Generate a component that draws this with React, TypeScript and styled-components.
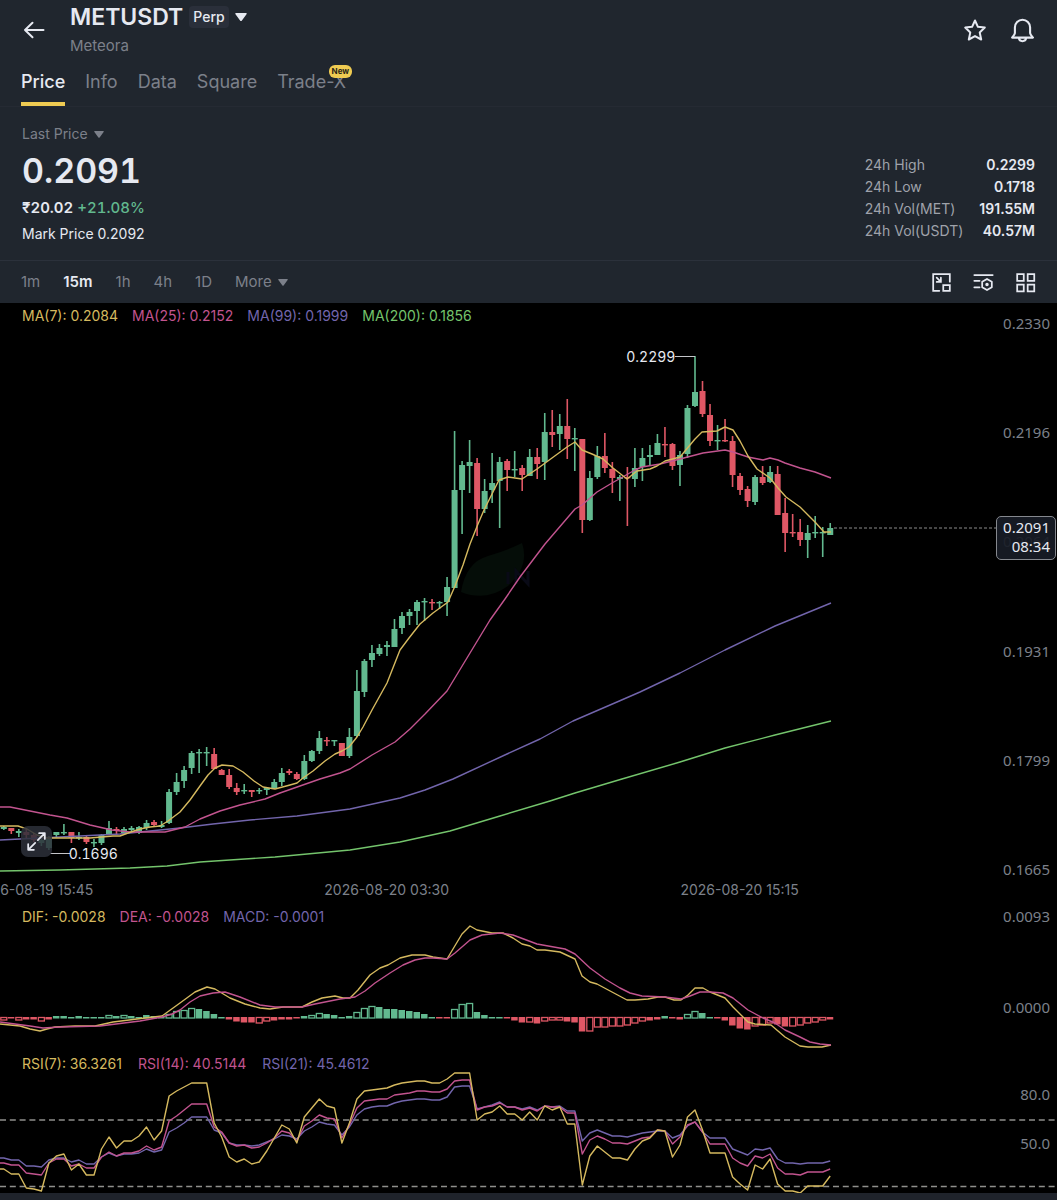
import React, { useState } from "react";
import styled, { createGlobalStyle } from "styled-components";

const color = {
  surface: "#20262e",
  line: "#2b313b",
  text: "#e6e9f1",
  muted: "#7c808a",
  soft: "#9fa2aa",
  up: "#62b98f",
  down: "#df5765",
  yellow: "#d5b95f",
  pink: "#c2548f",
  purple: "#7265ac",
  lime: "#74c46c",
  brand: "#efcb52",
};

const GlobalStyle = createGlobalStyle`
  * { box-sizing: border-box; }
  body { margin: 0; background: #000; }
  button, select { font: inherit; color: inherit; background: none; border: 0; padding: 0; margin: 0; cursor: pointer; }
  h1, p, dl, dd, dt { margin: 0; }
`;

const Page = styled.main`
  font-family: Inter, "Liberation Sans", sans-serif;
  font-size: 14px;
  line-height: 20px;
  color: ${color.text};
  background: #000;
  overflow: hidden;
`;

const Top = styled.div`
  background: ${color.surface};
`;

const Header = styled.header`
  display: flex;
  align-items: center;
  height: 60px;
  padding: 0 22px;
`;

const IconButton = styled.button`
  display: flex;
  svg { display: block; }
`;

const Pair = styled.div`
  flex: 1;
  margin-left: 24px;
  padding-bottom: 2px;
`;

const PairButton = styled.button`
  display: flex;
  align-items: center;
  gap: 6px;
  height: 34px;
`;

const PairName = styled.h1`
  font-size: 23px;
  line-height: 34px;
  font-weight: 600;
`;

const Tag = styled.span`
  padding: 0 4px;
  border-radius: 4px;
  background: #2a2f3a;
  line-height: 22px;
  font-weight: 500;
`;

const PairSub = styled.p`
  font-size: 15px;
  line-height: 24px;
  color: ${color.muted};
`;

const HeaderActions = styled.div`
  display: flex;
  gap: 23px;
`;

const Tabs = styled.nav`
  display: flex;
  gap: 20px;
  height: 47px;
  padding: 0 21px;
  border-bottom: 1px solid #252a33;
`;

const Tab = styled.a<{ $active?: boolean }>`
  position: relative;
  line-height: 44px;
  height: 46px;
  font-size: 18px;
  font-weight: ${(p) => (p.$active ? 500 : 400)};
  color: ${(p) => (p.$active ? color.text : color.muted)};
  border-bottom: 4px solid ${(p) => (p.$active ? color.brand : "transparent")};
  text-decoration: none;
`;

const NewBadge = styled.span`
  position: absolute;
  top: 5px;
  right: -6px;
  padding: 0 3px;
  border-radius: 6px;
  background: ${color.brand};
  color: #2a2618;
  font-size: 8px;
  line-height: 13px;
  font-weight: 700;
`;

const Summary = styled.section`
  display: flex;
  justify-content: space-between;
  padding: 17px 22px 12px;
  border-bottom: 1px solid ${color.line};
`;

const Picker = styled.label`
  display: inline-flex;
  align-items: center;
  gap: 6px;
  color: ${color.muted};
  select { appearance: none; line-height: 20px; outline: none; }
  option { color: #000; }
`;

const LastPrice = styled.div`
  margin-top: 2px;
  font-size: 34px;
  line-height: 50px;
  font-weight: 600;
  font-variant-numeric: tabular-nums;
`;

const Change = styled.p`
  font-size: 15px;
  line-height: 24px;
  font-weight: 500;
  font-variant-numeric: tabular-nums;
  color: ${color.up};
  strong { color: ${color.text}; font-weight: 600; }
`;

const Mark = styled.p`
  line-height: 28px;
`;

const Stats = styled.dl`
  display: grid;
  grid-template-columns: auto auto;
  column-gap: 16px;
  align-content: start;
  margin-top: 30px;
  line-height: 22px;
  dt { color: ${color.soft}; }
  dd { text-align: right; font-weight: 600; }
`;

const Toolbar = styled.div`
  display: flex;
  align-items: center;
  justify-content: space-between;
  height: 42px;
  padding: 0 21px;
`;

const Intervals = styled.div`
  display: flex;
  gap: 23px;
  font-size: 15px;
`;

const Interval = styled.button<{ $active: boolean }>`
  font-weight: ${(p) => (p.$active ? 600 : 400)};
  color: ${(p) => (p.$active ? color.text : color.muted)};
`;

const Tools = styled.div`
  display: flex;
  gap: 21px;
`;

const Pane = styled.section<{ $height: number }>`
  position: relative;
  display: grid;
  height: ${(p) => p.$height}px;
  > * { grid-area: 1 / 1; }
`;

const Plot = styled.svg`
  display: block;
  width: 100%;
  height: 100%;
  min-height: 0;
`;

const Legend = styled.div<{ $top: number; $gap?: number }>`
  z-index: 1;
  display: flex;
  align-self: start;
  gap: ${(p) => p.$gap ?? 14}px;
  padding: ${(p) => p.$top}px 22px 0;
`;

const LegendItem = styled.span<{ $color: string }>`
  color: ${(p) => p.$color};
`;

const Scale = styled.div<{ $top: number; $bottom: number }>`
  justify-self: end;
  display: flex;
  flex-direction: column;
  justify-content: space-between;
  padding: ${(p) => p.$top}px 7px ${(p) => p.$bottom}px 0;
  text-align: right;
  font-family: "Noto Sans", sans-serif;
  font-size: 15px;
  color: ${color.muted};
`;

const PriceTag = styled.div`
  position: absolute;
  top: 213px;
  right: 1px;
  padding: 1px 5px 3px 6px;
  border: 1px solid #85888e;
  border-radius: 5px;
  background: rgba(24, 28, 38, 0.92);
  font-family: "Noto Sans", sans-serif;
  font-size: 15px;
  line-height: 19px;
  text-align: right;
`;

const PointLabel = styled.span<{ $left?: string; $right?: string; $top: number }>`
  position: absolute;
  top: ${(p) => p.$top}px;
  left: ${(p) => p.$left ?? "auto"};
  right: ${(p) => p.$right ?? "auto"};
  font-variant-numeric: tabular-nums;
`;

const ExpandButton = styled(IconButton)`
  position: absolute;
  left: 21px;
  bottom: 23px;
  padding: 5px;
  border-radius: 7px;
  background: rgba(45, 48, 58, 0.85);
`;

const Dates = styled.div`
  display: grid;
  grid-template-columns: 353fr 353fr 353fr 141fr;
  margin-left: -13.5%;
  text-align: center;
  color: ${color.muted};
`;

const Footer = styled.footer`
  height: 7px;
  background: #1f232b;
`;

type Candle = [number, number, number, number, number];

// direction, high, body top, body bottom, low — all but the first on the plot's vertical scale
const candles: Candle[] = [
  [1,826,827,829,830],[0,828,828,831,834],[1,829,831,833,837],[0,829,832,835,838],[0,833,835,840,842],[1,837,840,843,846],[1,836,839,848,850],
  [1,832,832,835,837],[1,824,832,833,835],[0,832,832,838,843],[1,832,837,838,840],[0,835,837,842,844],[1,839,842,843,847],[1,834,835,843,845],
  [1,821,828,834,834],[0,827,829,831,835],[1,827,829,833,834],[1,826,828,830,832],[1,826,827,833,834],[1,820,823,828,830],[0,820,822,825,827],
  [1,821,825,827,828],[1,789,792,823,824],[1,773,782,792,795],[1,766,770,781,788],[1,751,753,768,774],[1,749,752,753,773],[1,747,752,753,766],
  [0,748,754,769,769],[0,769,770,775,775],[0,769,775,787,789],[0,783,788,792,795],[1,784,790,791,794],[0,790,790,792,797],[1,788,790,791,794],
  [1,787,788,790,795],[1,779,782,788,789],[1,768,773,782,786],[0,769,771,773,775],[0,772,774,779,780],[1,755,761,779,780],[1,750,751,761,762],
  [1,731,738,751,754],[0,737,740,741,746],[1,740,740,741,746],[0,743,743,756,756],[1,728,737,756,758],[1,670,691,736,737],[1,659,661,692,697],
  [1,645,653,660,667],[1,644,648,654,656],[1,641,645,647,656],[1,619,629,647,647],[1,612,616,628,634],[1,609,612,616,625],[1,600,602,611,625],
  [1,598,601,602,621],[0,599,602,603,610],[1,601,602,603,609],[1,577,587,602,616],[1,431,490,588,588],[1,461,465,490,534],[1,440,462,466,493],
  [0,458,463,509,536],[1,479,491,509,513],[1,453,483,490,503],[1,457,462,481,528],[0,459,461,470,491],[1,451,469,470,477],[0,465,468,475,491],
  [1,449,457,476,476],[0,448,457,464,479],[1,413,432,462,480],[0,410,432,435,447],[1,414,426,434,450],[0,399,426,439,459],[1,428,438,439,471],
  [0,439,439,520,533],[1,471,478,520,521],[1,446,456,477,479],[0,433,456,468,473],[0,462,469,478,493],[1,475,477,479,501],[0,467,477,478,526],
  [1,448,468,479,487],[1,448,458,467,481],[1,445,455,457,466],[1,434,443,455,455],[0,427,444,445,457],[0,443,444,466,470],[1,451,455,465,486],
  [1,405,408,454,458],[1,356,392,406,407],[0,381,391,414,417],[0,404,415,441,446],[1,425,440,441,450],[0,419,440,441,442],[0,436,441,475,487],
  [0,473,476,490,495],[0,486,489,501,507],[1,475,477,502,505],[0,466,477,483,485],[1,466,472,482,483],[0,466,474,515,515],[0,498,513,533,552],
  [0,514,532,533,537],[0,519,532,540,546],[1,525,533,540,558],[1,516,532,533,538],[1,527,532,533,557],[1,523,528,535,535],
];

const ma7 = "0,826 18,826 27,829 37,835 47,838 55,838 90,838 113,836 120,836 128,833 140,829 150,827 160,826 168,821 180,812 190,800 200,786 208,775 215,768 222,765 233,766 243,772 254,781 263,787 275,789 290,785 297,783 303,778 313,771 325,761 335,754 342,751 349,747 357,737 363,727 372,710 387,683 400,650 409,638 420,624 433,613 448,602 455,586 463,565 470,544 478,524 484,510 499,480 508,477 522,479 537,469 552,458 567,447 575,442 582,450 592,454 603,459 613,468 627,479 637,471 650,469 657,466 665,461 680,457 695,439 702,432 717,431 725,427 733,430 740,441 748,456 757,469 770,478 778,488 786,497 800,507 815,522 824,532 831,532";
const ma25 = "0,807 10,807 30,811 50,815 67,818 90,825 112,830 130,832 145,832 165,832 185,827 200,819 220,811 240,805 265,799 280,793 300,786 320,779 340,773 350,769 372,755 395,742 410,729 425,714 447,691 470,653 490,620 505,599 520,577 545,544 575,509 582,505 597,492 612,483 635,470 642,467 660,464 680,459 703,453 725,450 733,452 748,457 763,460 770,458 778,460 785,463 800,468 815,472 831,478";
const ma99 = "0,840 60,837 120,834 180,828 213,824 250,820 297,816 350,809 400,798 425,790 453,779 507,754 540,739 573,721 617,702 640,692 680,673 725,650 775,626 831,603";
const ma200 = "0,871 60,870 130,868 167,866 200,862 275,857 350,850 400,842 450,831 500,816 550,801 575,793 622,779 680,762 725,748 775,735 831,721";

const dif = "0,1024 20,1026 30,1029 40,1031 47,1029 55,1027 75,1026 95,1026 113,1022 145,1018 162,1016 180,1003 195,992 207,987 215,989 230,998 245,1004 260,1008 270,1009 283,1007 302,1007 312,1002 322,998 335,996 343,998 350,998 358,990 370,975 380,968 388,965 400,958 412,955 425,955 433,957 440,958 447,959 462,934 470,926 477,930 492,933 503,933 513,938 522,944 530,946 537,950 545,950 560,952 575,959 582,976 590,982 597,984 612,992 627,1000 635,1000 648,999 658,997 665,997 674,1000 681,1000 688,995 695,988 703,988 710,992 725,998 733,1007 748,1022 755,1024 771,1025 785,1037 800,1046 808,1047 822,1047 831,1045";
const dea = "0,1022 15,1024 30,1026 43,1028 60,1027 100,1026 140,1021 162,1017 172,1014 180,1010 190,1002 200,996 213,993 225,992 240,997 260,1005 275,1007 302,1007 315,1004 340,999 355,997 365,991 375,983 390,973 403,965 415,960 425,958 433,958 447,959 455,953 470,940 482,935 500,933 513,935 537,944 565,949 575,954 590,968 605,979 620,988 630,993 642,996 665,997 681,999 690,996 700,992 710,992 723,993 733,998 748,1010 763,1018 775,1023 785,1030 800,1037 810,1042 820,1044 831,1045";

const histogram = [
  -3,-1,-3,-2,-2,-4,-2,2,2,1,2,1,1,1,3,2,3,2,1,3,2,1,4,7,8,10,9,7,4,1,-2,-4,-5,-5,-6,-4,-3,-2,-2,-1,2,3,5,4,3,1,2,6,10,12,11,9,9,8,7,6,4,1,
  -1,-1,9,14,15,6,3,1,1,-1,-3,-5,-5,-6,-4,-3,-3,-4,-5,-14,-14,-10,-10,-9,-9,-8,-6,-4,-3,-2,2,-1,-2,4,7,5,1,-1,-3,-8,-11,-12,-9,-8,-6,-7,-9,-9,-8,-6,-5,-3,-2,
];
const hollow = new Set([0,2,5,14,16,22,23,24,25,34,35,41,42,47,48,49,60,61,62,70,72,73,74,78,79,80,81,82,83,84,85,91,92,100,101,102,105,106,107,108,109]);

const rsi7 = [1169,1174,1174,1188,1189,1191,1163,1156,1154,1170,1164,1175,1175,1149,1137,1148,1141,1141,1136,1127,1140,1131,1096,1091,1087,1083,1083,1083,1123,1137,1157,1162,1159,1164,1162,1151,1138,1125,1129,1143,1117,1108,1099,1106,1108,1143,1123,1099,1091,1090,1089,1088,1085,1083,1082,1081,1081,1083,1083,1079,1073,1073,1073,1120,1114,1112,1106,1114,1114,1120,1112,1120,1106,1110,1107,1124,1124,1185,1156,1146,1152,1158,1158,1160,1149,1141,1138,1130,1131,1157,1145,1117,1110,1130,1153,1153,1153,1177,1184,1190,1165,1169,1159,1184,1191,1191,1193,1186,1186,1186,1176];
const rsi14 = [1163,1165,1165,1173,1174,1175,1163,1159,1159,1166,1164,1168,1168,1157,1152,1156,1153,1153,1151,1146,1150,1147,1121,1116,1110,1104,1104,1104,1127,1132,1143,1146,1145,1148,1147,1143,1138,1131,1133,1141,1126,1121,1115,1118,1119,1138,1125,1108,1101,1100,1099,1099,1095,1094,1093,1091,1091,1092,1092,1089,1081,1080,1080,1110,1107,1106,1103,1107,1107,1110,1108,1111,1106,1107,1107,1113,1113,1154,1140,1136,1139,1143,1143,1144,1141,1138,1137,1130,1131,1144,1137,1125,1122,1132,1144,1144,1144,1158,1163,1166,1156,1158,1154,1168,1174,1174,1175,1172,1172,1172,1169];
const rsi21 = [1158,1160,1160,1166,1166,1167,1160,1158,1158,1162,1160,1164,1164,1157,1153,1156,1154,1154,1153,1149,1152,1150,1132,1128,1123,1117,1117,1117,1130,1133,1143,1145,1145,1146,1145,1142,1139,1135,1136,1139,1131,1127,1122,1124,1125,1135,1127,1115,1109,1107,1106,1106,1103,1101,1100,1099,1099,1100,1100,1097,1087,1086,1086,1109,1107,1105,1102,1107,1107,1109,1107,1110,1106,1107,1106,1111,1111,1141,1133,1130,1133,1136,1136,1137,1135,1133,1132,1131,1131,1138,1135,1126,1122,1132,1138,1138,1138,1149,1152,1155,1149,1150,1148,1159,1163,1163,1164,1163,1163,1163,1161];

const xAt = (i: number) => 3.8 + 7.513 * i;
const toPoints = (ys: number[]) => `0,${ys[0]} ` + ys.map((y, i) => `${xAt(i).toFixed(1)},${y}`).join(" ");

function Line({ points, stroke }: { points: string; stroke: string }) {
  return <polyline points={points} fill="none" stroke={stroke} strokeWidth={1.4} strokeLinejoin="round" />;
}

function Caret({ size = 10 }: { size?: number }) {
  return (
    <svg width={size} height={(size * 7) / 10} viewBox="0 0 10 7" aria-hidden="true">
      <path d="M.8 0h8.4q1 .2.4 1L5.6 6.4q-.6.7-1.2 0L.4 1Q-.2.2.8 0z" fill="currentColor" />
    </svg>
  );
}

function Icon({ size, children, width = 2 }: { size: number; children: React.ReactNode; width?: number }) {
  return (
    <svg width={size} height={size} viewBox="0 0 24 24" fill="none" stroke={color.text} strokeWidth={width} strokeLinecap="round" strokeLinejoin="round" aria-hidden="true">
      {children}
    </svg>
  );
}

const intervals = ["1m", "15m", "1h", "4h", "1D"];

export default function App() {
  const [interval, setInterval] = useState("15m");
  return (
    <Page>
      <GlobalStyle />
      <Top>
        <Header>
          <IconButton aria-label="Back">
            <Icon size={24}><path d="M21.500 12H3M10.500 4.800L3 12l7.500 7.200" /></Icon>
          </IconButton>
          <Pair>
            <PairButton>
              <PairName>METUSDT</PairName>
              <Tag>Perp</Tag>
              <Caret size={12} />
            </PairButton>
            <PairSub>Meteora</PairSub>
          </Pair>
          <HeaderActions>
            <IconButton aria-label="Add to favourites">
              <Icon size={24}><path d="M12 2.500l2.900 6.300 6.900.8-5.100 4.800 1.500 7.100L12 18.100l-6.200 3.400 1.500-7.100L2.200 9.600l6.900-.8z" /></Icon>
            </IconButton>
            <IconButton aria-label="Price alerts">
              <Icon size={25}><path d="M2 18.800c1.600-1.700 2.500-2.600 2.700-4.300V9a7.300 7.300 0 0 1 14.600 0v5.500c.2 1.700 1.100 2.600 2.700 4.300zM8.500 19.400c.6 3.800 6.400 3.800 7 0" /></Icon>
            </IconButton>
          </HeaderActions>
        </Header>

        <Tabs>
          <Tab href="#price" $active>Price</Tab>
          <Tab href="#info">Info</Tab>
          <Tab href="#data">Data</Tab>
          <Tab href="#square">Square</Tab>
          <Tab href="#trade-x">Trade-X<NewBadge>New</NewBadge></Tab>
        </Tabs>

        <Summary>
          <div>
            <Picker>
              <select aria-label="Price type"><option>Last Price</option></select>
              <Caret />
            </Picker>
            <LastPrice>0.2091</LastPrice>
            <Change><strong>₹20.02</strong> +21.08%</Change>
            <Mark>Mark Price 0.2092</Mark>
          </div>
          <Stats>
            <dt>24h High</dt><dd>0.2299</dd>
            <dt>24h Low</dt><dd>0.1718</dd>
            <dt>24h Vol(MET)</dt><dd>191.55M</dd>
            <dt>24h Vol(USDT)</dt><dd>40.57M</dd>
          </Stats>
        </Summary>

        <Toolbar>
          <Intervals>
            {intervals.map((name) => (
              <Interval key={name} $active={name === interval} onClick={() => setInterval(name)}>{name}</Interval>
            ))}
            <Picker>
              <select aria-label="More intervals"><option>More</option></select>
              <Caret />
            </Picker>
          </Intervals>
          <Tools>
            <IconButton aria-label="Picture in picture">
              <Icon size={21}><path d="M9.500 21.500H2.500v-19h19v8.500M14 15h7.500v6.500H14zM6.500 6.500l4.500 4.500M11.300 6.500v4.800H6.500" strokeLinejoin="miter" /></Icon>
            </IconButton>
            <IconButton aria-label="Chart settings">
              <Icon size={21}><path d="M1.500 3.500h21M1.500 10h6M1.500 17.500h6M16 8l5.500 3.200v6.200L16 20.600l-5.500-3.200v-6.200z" /><circle cx="16" cy="14.300" r="1" fill={color.text} /></Icon>
            </IconButton>
            <IconButton aria-label="Layout">
              <Icon size={21}><path d="M2.500 2.500h7.500v7.500H2.500zM14.500 2.500H22v7.500h-7.500zM2.500 14.500h7.500V22H2.500zM14.500 14.500H22V22h-7.500z" strokeLinejoin="miter" /></Icon>
            </IconButton>
          </Tools>
        </Toolbar>
      </Top>

      <Pane $height={577}>
        <Plot viewBox="0 303 1057 577" preserveAspectRatio="none" role="img" aria-label="Candlestick chart with moving averages">
          <path d="M461 592Q466 562 488 556Q508 550 522 543Q530 566 508 586Q486 602 461 592z" fill="#050d08" />
          <path d="M508 572v12M516 584v-13l12 13v-13" stroke="#090a16" strokeWidth="3" fill="none" />
          {candles.map(([up, high, top, bottom, low], i) => (
            <g key={i} fill={up ? color.up : color.down}>
              <rect x={xAt(i) - 0.8} y={high} width={1.6} height={low - high} />
              <rect x={xAt(i) - 3} y={top} width={6} height={Math.max(1.4, bottom - top)} />
            </g>
          ))}
          <Line points={ma200} stroke={color.lime} />
          <Line points={ma99} stroke={color.purple} />
          <Line points={ma25} stroke={color.pink} />
          <Line points={ma7} stroke={color.yellow} />
          <path d="M675 356.500H695M50 853.500H70" stroke="#c4c5c9" />
          <path d="M834 528H996" stroke="#8b8b8b" strokeDasharray="3 2" />
        </Plot>
        <Legend $top={3}>
          <LegendItem $color={color.yellow}>MA(7): 0.2084</LegendItem>
          <LegendItem $color={color.pink}>MA(25): 0.2152</LegendItem>
          <LegendItem $color={color.purple}>MA(99): 0.1999</LegendItem>
          <LegendItem $color={color.lime}>MA(200): 0.1856</LegendItem>
        </Legend>
        <Scale $top={10} $bottom={1}>
          <span>0.2330</span><span>0.2196</span><span>0.2064</span><span>0.1931</span><span>0.1799</span><span>0.1665</span>
        </Scale>
        <PriceTag><div>0.2091</div><div>08:34</div></PriceTag>
        <PointLabel $right="36.1%" $top={44}>0.2299</PointLabel>
        <PointLabel $left="6.5%" $top={541}>0.1696</PointLabel>
        <ExpandButton aria-label="Expand chart">
          <Icon size={21}><path d="M2.500 21.500l8-8M2.500 15v6.500H9M13.500 10.500l8-8M15 2.500h6.500V9" /></Icon>
        </ExpandButton>
      </Pane>

      <Dates>
        <span>2026-08-19 15:45</span>
        <span>2026-08-20 03:30</span>
        <span>2026-08-20 15:15</span>
      </Dates>

      <Pane $height={150}>
        <Plot viewBox="0 900 1057 150" preserveAspectRatio="none" role="img" aria-label="MACD">
          {histogram.map((h, i) => {
            const stroke = h > 0 ? color.up : color.down;
            const y = h > 0 ? 1018 - h : 1017;
            return hollow.has(i) ? (
              <rect key={i} x={xAt(i) - 3} y={y + 0.5} width={6} height={Math.abs(h) - 0.5} fill="none" stroke={stroke} strokeWidth={1.3} />
            ) : (
              <rect key={i} x={xAt(i) - 3.5} y={y} width={6.5} height={Math.abs(h) + 0.5} fill={stroke} />
            );
          })}
          <Line points={dif} stroke={color.yellow} />
          <Line points={dea} stroke={color.pink} />
        </Plot>
        <Legend $top={7}>
          <LegendItem $color={color.yellow}>DIF: -0.0028</LegendItem>
          <LegendItem $color={color.pink}>DEA: -0.0028</LegendItem>
          <LegendItem $color={color.purple}>MACD: -0.0001</LegendItem>
        </Legend>
        <Scale $top={6} $bottom={33}><span>0.0093</span><span>0.0000</span></Scale>
      </Pane>

      <Pane $height={143}>
        <Plot viewBox="0 1050 1057 143" preserveAspectRatio="none" role="img" aria-label="Relative strength index">
          <path d="M0 1120H1057M0 1186.500H1057" stroke="#8f8f8c" strokeWidth="1.4" strokeDasharray="6 3.800" />
          <Line points={toPoints(rsi21)} stroke={color.purple} />
          <Line points={toPoints(rsi14)} stroke={color.pink} />
          <Line points={toPoints(rsi7)} stroke={color.yellow} />
        </Plot>
        <Legend $top={4} $gap={16}>
          <LegendItem $color={color.yellow}>RSI(7): 36.3261</LegendItem>
          <LegendItem $color={color.pink}>RSI(14): 40.5144</LegendItem>
          <LegendItem $color={color.purple}>RSI(21): 45.4612</LegendItem>
        </Legend>
        <Scale $top={34} $bottom={40}><span>80.0</span><span>50.0</span></Scale>
      </Pane>
      <Footer />
    </Page>
  );
}
